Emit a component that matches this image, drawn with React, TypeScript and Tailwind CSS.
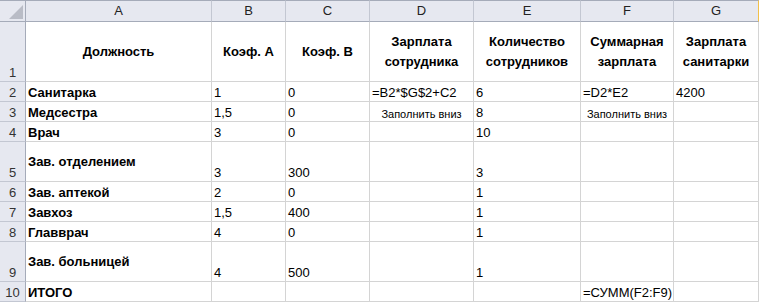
import React from "react";

type Cell = {
  text?: string;
  bold?: boolean;
  center?: boolean;
  middle?: boolean;
  small?: boolean;
};

type Row = {
  num: number;
  h: string;
  cells: Cell[];
};

const cols = ["A", "B", "C", "D", "E", "F", "G"];

const hdr = (text: string): Cell => ({ text, bold: true, center: true, middle: true });
const b = (text: string, middle = false): Cell => ({ text, bold: true, middle });
const t = (text?: string): Cell => ({ text });
const note: Cell = { text: "Заполнить вниз", center: true, small: true };

const rows: Row[] = [
  {
    num: 1,
    h: "h-[60px]",
    cells: [
      hdr("Должность"),
      hdr("Коэф. А"),
      hdr("Коэф. В"),
      hdr("Зарплата сотрудника"),
      hdr("Количество сотрудников"),
      hdr("Суммарная зарплата"),
      hdr("Зарплата санитарки"),
    ],
  },
  { num: 2, h: "h-[20px]", cells: [b("Санитарка"), t("1"), t("0"), t("=B2*$G$2+C2"), t("6"), t("=D2*E2"), t("4200")] },
  { num: 3, h: "h-[20px]", cells: [b("Медсестра"), t("1,5"), t("0"), note, t("8"), note, t()] },
  { num: 4, h: "h-[20px]", cells: [b("Врач"), t("3"), t("0"), t(), t("10"), t(), t()] },
  { num: 5, h: "h-[40px]", cells: [b("Зав. отделением", true), t("3"), t("300"), t(), t("3"), t(), t()] },
  { num: 6, h: "h-[20px]", cells: [b("Зав. аптекой"), t("2"), t("0"), t(), t("1"), t(), t()] },
  { num: 7, h: "h-[20px]", cells: [b("Завхоз"), t("1,5"), t("400"), t(), t("1"), t(), t()] },
  { num: 8, h: "h-[20px]", cells: [b("Главврач"), t("4"), t("0"), t(), t("1"), t(), t()] },
  { num: 9, h: "h-[40px]", cells: [b("Зав. больницей", true), t("4"), t("500"), t(), t("1"), t(), t()] },
  { num: 10, h: "h-[20px]", cells: [b("ИТОГО"), t(), t(), t(), t(), t("=СУММ(F2:F9)"), t()] },
];

function SheetCell({ cell, h }: { cell: Cell; h: string }) {
  const align = cell.center ? "justify-center text-center" : "justify-start pl-[2px]";
  const valign = cell.middle ? "items-center" : "items-end";
  const size = cell.small ? "text-[11px] leading-[14px]" : "text-[13px] leading-[16px]";
  const wrap = cell.bold && cell.center ? "leading-[20px] whitespace-normal px-2" : "";
  return (
    <div
      className={`${h} flex ${valign} ${align} border-r border-b border-[#d4d4d4] bg-white whitespace-nowrap text-black`}
    >
      <span className={`${size} ${wrap} ${cell.bold ? "font-bold" : ""}`}>{cell.text}</span>
    </div>
  );
}

export default function App() {
  return (
    <div
      className="w-[759px] h-[302px] overflow-hidden bg-white"
      style={{ fontFamily: '"Liberation Sans", Arial, sans-serif' }}
    >
      <div className="grid grid-cols-[26px_186px_74px_84px_104px_107px_93px_85px]">
        {/* corner with select-all triangle */}
        <div className="h-[22px] relative bg-[#e6e8f0] border-t border-r border-b border-[#a5abb9]">
          <svg className="absolute right-[2px] bottom-[2px]" width="14" height="14" viewBox="0 0 14 14">
            <polygon points="14,0 14,14 0,14" fill="#b9bcc6" />
          </svg>
        </div>
        {cols.map((c, i) => (
          <div
            key={c}
            className={`h-[22px] flex items-center justify-center bg-[#e6e8f0] border-t border-b border-r border-t-[#a5abb9] border-b-[#a5abb9] ${
              i === cols.length - 1 ? "border-r-[#f2c04a]" : "border-r-[#c3c7d2]"
            } text-[13px] text-[#222]`}
          >
            {c}
          </div>
        ))}
        {rows.map((r) => (
          <React.Fragment key={r.num}>
            <div
              className={`${r.h} flex items-end justify-center bg-[#e6e8f0] border-r border-b border-r-[#a5abb9] border-b-[#c3c7d2] text-[13px] leading-[16px] text-[#333]`}
            >
              {r.num}
            </div>
            {r.cells.map((cell, i) => (
              <SheetCell key={i} cell={cell} h={r.h} />
            ))}
          </React.Fragment>
        ))}
      </div>
    </div>
  );
}
